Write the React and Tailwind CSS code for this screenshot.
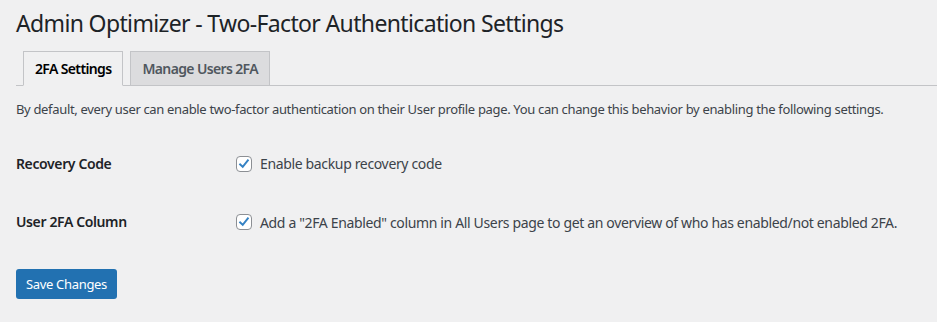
import { useState } from 'react';

const Check = ({ checked, onChange }) => (
  <button
    type="button"
    onClick={onChange}
    className="flex h-4 w-4 shrink-0 items-center justify-center rounded-[4px] border border-[#8c8f94] bg-white"
  >
    {checked && (
      <svg viewBox="0 0 20 20" className="h-[18px] w-[18px]">
        <path d="M4.5 10.5 L8.2 14 L15.5 5" fill="none" stroke="#3582c4" strokeWidth="2.8" strokeLinecap="square" />
      </svg>
    )}
  </button>
);

const SettingRow = ({ label, text, checked, onToggle }) => (
  <div className="flex">
    <div className="w-[210px] shrink-0 py-5 pr-2.5 text-[14px] font-semibold leading-[1.3] tracking-[-0.027em] text-[#1d2327]">{label}</div>
    <div className="flex items-center gap-2 px-2.5 py-[15px] text-[14px] tracking-[-0.025em] text-[#3c434a]">
      <Check checked={checked} onChange={onToggle} />
      <span>{text}</span>
    </div>
  </div>
);

export default function App() {
  const [recovery, setRecovery] = useState(true);
  const [column, setColumn] = useState(true);

  return (
    <div className="min-h-[322px] bg-[#f0f0f1] pl-4 pt-[9px] text-[#3c434a]" style={{ fontFamily: '"Noto Sans", sans-serif' }}>
      <h1 className="text-[23px] font-normal leading-[1.3] tracking-[-0.028em] text-[#1d2327]">
        Admin Optimizer - Two-Factor Authentication Settings
      </h1>

      <div className="mt-[12px] flex gap-[7px] border-b border-[#c3c4c7] pl-[7px] tracking-[-0.04em]">
        <div className="-mb-px border border-b-[#f0f0f1] border-[#c3c4c7] bg-[#f0f0f1] px-[11px] py-[6px] text-[14px] font-semibold leading-[21px] text-[#000]">
          2FA Settings
        </div>
        <div className="border border-b-0 border-[#c3c4c7] bg-[#dcdcde] px-[11px] py-[6px] text-[14px] font-semibold leading-[21px] text-[#50575e]">
          Manage Users 2FA
        </div>
      </div>

      <p className="mt-[14px] text-[13px] leading-[19px] tracking-[-0.026em]">
        By default, every user can enable two-factor authentication on their User profile page. You can change this behavior by enabling the following settings.
      </p>

      <div className="mt-[16px]">
        <SettingRow label="Recovery Code" text="Enable backup recovery code" checked={recovery} onToggle={() => setRecovery(!recovery)} />
        <SettingRow
          label="User 2FA Column"
          text={'Add a "2FA Enabled" column in All Users page to get an overview of who has enabled/not enabled 2FA.'}
          checked={column}
          onToggle={() => setColumn(!column)}
        />
      </div>

      <button
        type="button"
        className="mt-[18px] rounded-[3px] bg-[#2271b1] px-[10px] py-[4px] text-[13px] leading-[22px] tracking-[-0.025em] text-white"
      >
        Save Changes
      </button>
    </div>
  );
}
